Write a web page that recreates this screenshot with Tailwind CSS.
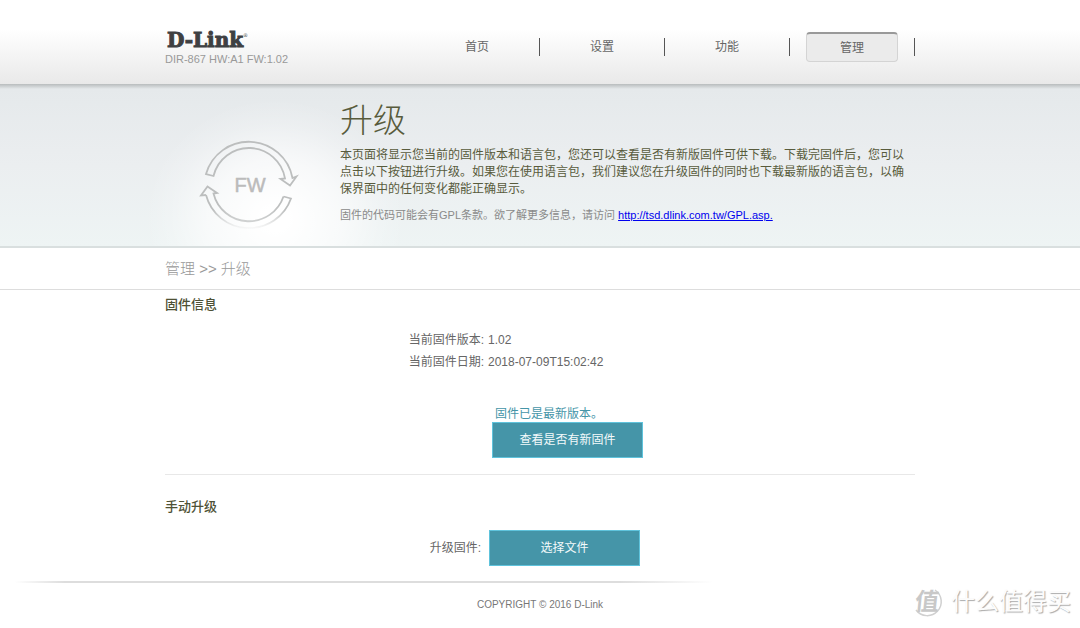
<!DOCTYPE html>
<html lang="zh-CN">
<head>
<meta charset="utf-8">
<title>D-Link 升级</title>
<script src="https://cdn.jsdelivr.net/npm/@tailwindcss/browser@4"></script>
</head>
<body class="min-h-screen bg-white font-['Liberation_Sans','Noto_Sans_CJK_SC',sans-serif] text-xs text-[#666]">
<header class="h-[84px] bg-linear-to-b from-white from-35% to-[#e9e9e9]">
  <div class="mx-auto flex max-w-[750px] justify-between">
    <div class="pt-7">
      <div class="pl-0.5 font-['DejaVu_Serif',serif] text-[20px] leading-6 font-bold text-[#3e4042] [-webkit-text-stroke:1px_#3e4042]">D-Link<sup class="align-super text-[5px] leading-none font-normal [-webkit-text-stroke:0]">®</sup></div>
      <div class="text-[11px] leading-[14px] text-[#999]">DIR-867 HW:A1 FW:1.02</div>
    </div>
    <nav class="flex w-[500px] pt-8 text-[#666]">
      <div class="flex h-[30px] flex-1 items-center"><a href="#" class="flex-1 text-center">首页</a><span class="h-[18px] w-px bg-[#555]"></span></div>
      <div class="flex h-[30px] flex-1 items-center"><a href="#" class="flex-1 text-center">设置</a><span class="h-[18px] w-px bg-[#555]"></span></div>
      <div class="flex h-[30px] flex-1 items-center"><a href="#" class="flex-1 text-center">功能</a><span class="h-[18px] w-px bg-[#555]"></span></div>
      <div class="flex h-[30px] flex-1 items-center"><a href="#" class="mx-4 flex h-[30px] flex-1 items-center justify-center rounded border border-t-2 border-[#d4d4d4] border-t-[#999] bg-[#ebebeb]">管理</a><span class="h-[18px] w-px bg-[#555]"></span></div>
    </nav>
  </div>
</header>
<section class="h-[164px] border-b-2 border-[#d9dfdf] bg-[linear-gradient(#b8bcbd,#e5e9eb_5px,#ebeef0_50%,#eef4f4)]">
  <div class="mx-auto flex h-full max-w-[750px]">
    <div class="-ml-5 flex w-[270px] shrink-0 bg-[radial-gradient(ellipse_130px_120px_at_130px_135px,#fff_10%,#ffffffa0_50%,#ffffff30_80%,#fff0_100%)] pt-[51px] pl-[50px]">
      <svg class="h-[100px] w-[110px]" viewBox="195 135 110 100" fill="none" stroke-width="1.8" aria-hidden="true">
        <defs><linearGradient id="fade" gradientUnits="userSpaceOnUse" x1="0" y1="185" x2="0" y2="230"><stop offset=".55" stop-color="#bcbebe"/><stop offset="1" stop-color="#bcbebe" stop-opacity="0"/></linearGradient>
        <linearGradient id="inner" gradientUnits="userSpaceOnUse" x1="0" y1="185" x2="0" y2="224"><stop offset=".5" stop-color="#bcbebe"/><stop offset="1" stop-color="#d2d4d4"/></linearGradient></defs>
        <path stroke="#bcbebe" d="M206 174A44.500 44.500 0 0 1 292.500 178L296.500 176.500L290 185.500L280.500 179L285 178.500A36.500 36.500 0 0 0 213.500 176Z"/>
        <path stroke="url(#fade)" d="M283.500 196.500L291 198.500A44.500 44.500 0 0 1 206 195"/>
        <path stroke="url(#inner)" d="M283.500 196.500A36.500 36.500 0 0 1 213.500 193.500L217 193L207.500 186.500L201 195.500L206 195"/>
        <text x="250" y="192" text-anchor="middle" font-family="Liberation Sans, sans-serif" font-size="20" fill="#bbb" stroke="#bbb" stroke-width=".5">FW</text>
      </svg>
    </div>
    <div class="-ml-[75px] min-w-0 flex-1 pt-[13px] text-[#585b3c]">
      <h1 class="text-[33px] leading-[48px] font-light">升级</h1>
      <p class="pt-0.5 leading-[17px] whitespace-nowrap">本页面将显示您当前的固件版本和语言包，您还可以查看是否有新版固件可供下载。下载完固件后，您可以<br>点击以下按钮进行升级。如果您在使用语言包，我们建议您在升级固件的同时也下载最新版的语言包，以确<br>保界面中的任何变化都能正确显示。</p>
      <p class="pt-2 text-[11px] leading-[18px] text-[#8a8a8a]">固件的代码可能会有GPL条款。欲了解更多信息，请访问 <a href="http://tsd.dlink.com.tw/GPL.asp" class="text-[#0000ee] underline">http://tsd.dlink.com.tw/GPL.asp.</a></p>
    </div>
  </div>
</section>
<div class="h-[42px] border-b border-[#ddd]">
  <div class="mx-auto max-w-[750px] text-[15px] leading-[42px] font-light text-[#999]">管理 &gt;&gt; 升级</div>
</div>
<main class="mx-auto max-w-[750px]">
  <section class="h-[185px] border-b border-[#e8e8e8]">
    <h2 class="pt-1 text-[13px] leading-[22px] font-medium text-[#4e5135]">固件信息</h2>
    <dl class="grid grid-cols-[319px_1fr] gap-x-1 pt-[13px] leading-[22px]">
      <dt class="text-right">当前固件版本:</dt><dd>1.02</dd>
      <dt class="text-right">当前固件日期:</dt><dd>2018-07-09T15:02:42</dd>
    </dl>
    <p class="pt-[33px] pl-[330px] leading-4 text-[#4595a8]">固件已是最新版本。</p>
    <button type="button" class="ml-[327px] block h-9 w-[151px] border border-[#5fc3dc] bg-[#4595a8] text-[#f4fafb]">查看是否有新固件</button>
  </section>
  <section class="pt-[21px]">
    <h2 class="text-[13px] leading-[22px] font-medium text-[#4e5135]">手动升级</h2>
    <div class="flex items-center gap-2 pt-3">
      <label for="pick" class="w-[316px] text-right">升级固件:</label>
      <button id="pick" type="button" class="h-9 w-[151px] border border-[#5fc3dc] bg-[#4595a8] text-[#f4fafb]">选择文件</button>
    </div>
  </section>
</main>
<footer class="relative pt-[15px] text-center">
  <div class="h-0.5 w-2/3 bg-[linear-gradient(90deg,#ddd0_2%,#ddd_9%,#ddd_86%,#ddd0_99%)]"></div>
  <p class="pt-3 text-[10px] leading-5 text-[#777]">COPYRIGHT © 2016 D-Link</p>
  <div class="absolute top-[18px] right-[9px] flex items-center gap-2 text-2xl leading-9 text-[#fcfcfc] [text-shadow:1px_1px_1px_#aaa]">
    <span class="relative flex size-8 items-center justify-center text-[#c8c8c8] [text-shadow:none]"><svg class="absolute inset-0 size-8" viewBox="0 0 32 32" fill="none" stroke="#d0d0d0" stroke-width="1.5" aria-hidden="true"><path d="M24 4A14 14 0 1 1 5 24"/></svg><span class="-skew-x-6 text-2xl font-bold">值</span></span>
    <span>什么值得买</span>
  </div>
</footer>
</body>
</html>
